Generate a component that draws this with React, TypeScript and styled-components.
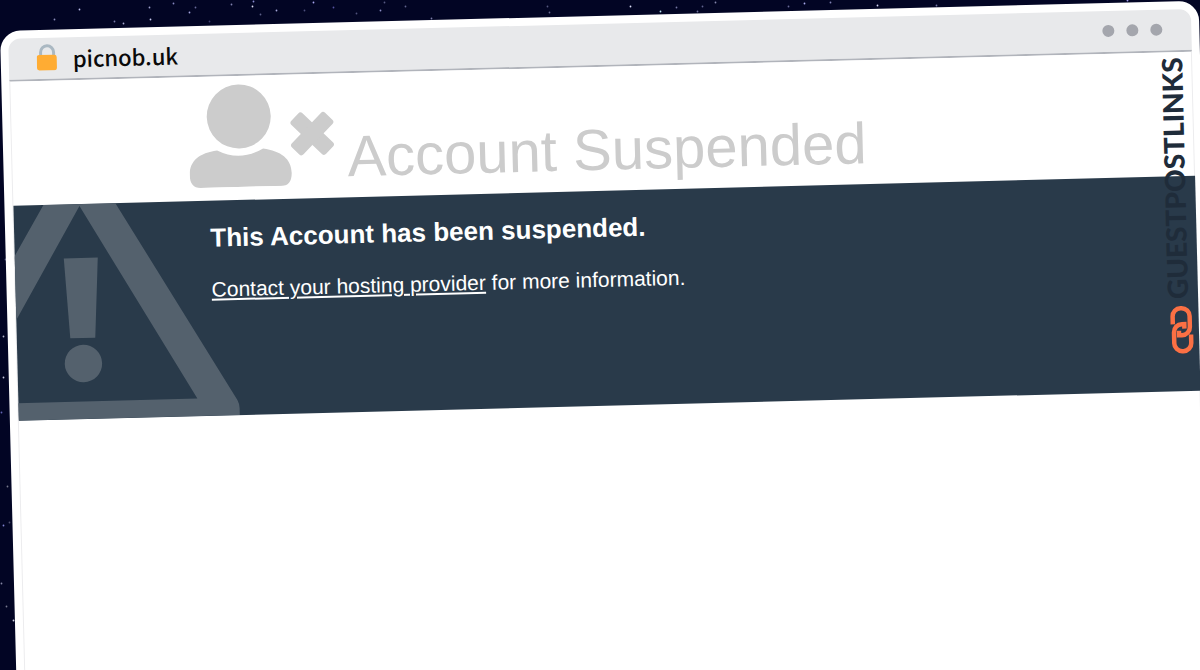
import React from "react";
import styled, { createGlobalStyle } from "styled-components";

const GlobalStyle = createGlobalStyle`
  * { box-sizing: border-box; }
  html, body { margin: 0; height: 100%; overflow: hidden; background: #020524; }
  #root { height: 100%; }
  h1, h2, p { margin: 0; }
`;

const Scene = styled.div`
  position: relative;
  display: flex;
  height: 100vh;
  overflow: hidden;
  padding: 31px 1px 0 0;
  font-family: "Liberation Sans", Arial, sans-serif;
`;

const Sky = styled.svg`
  position: absolute;
  inset: 0;
`;

const BrowserWindow = styled.div`
  position: relative;
  flex: 1;
  display: flex;
  flex-direction: column;
  min-height: 110vh;
  padding: 8px;
  background: #fff;
  border-radius: 20px;
  transform: rotate(-1.45deg);
  transform-origin: 0 0;
`;

const TitleBar = styled.header`
  display: flex;
  align-items: center;
  gap: 15px;
  height: 43px;
  padding: 0 29px 2px 28px;
  background: #e8e9eb;
  border-bottom: 2px solid #b1b4bb;
  border-radius: 12px 12px 0 0;
`;

const Address = styled.span`
  flex: 1;
  color: #0a0a0a;
  font: 500 22px/32px "Noto Sans CJK SC", sans-serif;
`;

const WindowDots = styled.div`
  display: flex;
  gap: 12px;
`;

const Dot = styled.span`
  width: 12px;
  height: 12px;
  border-radius: 50%;
  background: #a4a6ad;
`;

const Page = styled.main`
  position: relative;
  flex: 1;
  border: solid #ececee;
  border-width: 0 1px;
`;

const Heading = styled.div`
  display: flex;
  align-items: flex-end;
  gap: 8px;
  height: 124px;
  padding: 0 0 13px 15%;
  color: #ccc;
`;

const Title = styled.h1`
  font-size: 58px;
  font-weight: 400;
  line-height: 56px;
`;

const Notice = styled.section`
  position: relative;
  height: 215px;
  margin: 0 -1px 0 0;
  padding: 21px 0 0 196px;
  background: #293a4a;
  color: #fff;
`;

const WarningSign = styled.svg`
  position: absolute;
  left: 0;
  top: 0;
`;

const NoticeTitle = styled.h2`
  font-size: 26px;
  line-height: 32px;
`;

const NoticeText = styled.p`
  margin-top: 24px;
  font-size: 21px;
  line-height: 24px;
`;

const ProviderLink = styled.a`
  color: inherit;
  text-decoration: underline;
`;

const Watermark = styled.div`
  position: absolute;
  top: 5px;
  right: 4px;
  display: flex;
  flex-direction: column;
  align-items: flex-end;
  gap: 6px;
  color: #1f2c3a;
`;

const WatermarkText = styled.span`
  writing-mode: vertical-rl;
  transform: rotate(180deg);
  font: 900 28px/32px Lato, sans-serif;
`;

const stars: [number, number, string][] = [
  [79, 9, "#b9bbea"], [54, 19, "#8a8cba"], [114, 21, "#777aa8"], [123, 23, "#a7a9cf"], [149, 7, "#9ea0cc"],
  [150, 19, "#c6c8ee"], [173, 3, "#8688c0"], [195, 7, "#686a99"], [189, 12, "#a3a5dd"], [209, 21, "#3d3f6c"],
  [231, 4, "#8183b0"], [252, 6, "#dcdcf0"], [253, 1, "#8a8cd0"], [276, 10, "#a5a7d8"], [260, 14, "#5c6088"],
  [304, 10, "#4c4f7c"], [313, 2, "#a9a6f0"], [333, 7, "#5553a0"], [356, 13, "#50537c"], [380, 10, "#8c8ec4"],
  [384, 2, "#565982"], [405, 6, "#62658e"], [431, 18, "#7c7ea8"],
  [547, 6, "#55587f"], [549, 12, "#65688e"], [630, 6, "#dddff8"], [660, 11, "#b8e2ef"],
  [676, 7, "#7577a2"], [702, 6, "#5f628d"], [697, 11, "#6f719c"], [715, 2, "#8487ad"], [788, 6, "#696b98"],
  [804, 3, "#a9abeb"], [830, 2, "#8183b5"], [877, 5, "#d5d7f5"], [936, 5, "#7477a5"], [1127, 0, "#a6a0f0"],
  [5, 259, "#55587f"], [3, 336, "#b2b5cb"], [3, 377, "#c6c8dd"], [1, 412, "#6265b5"],
  [7, 486, "#77798c"], [3, 525, "#8083d0"], [9, 522, "#4f5270"], [1, 583, "#8587a5"], [6, 606, "#77798f"], [13, 620, "#d0d2e2"],
];

export default function App() {
  return (
    <>
      <GlobalStyle />
      <Scene>
        <Sky width="100%" height="100%" aria-hidden="true">
          {stars.map(([x, y, color]) => (
            <circle key={`${x}-${y}`} cx={x + 0.5} cy={y + 0.5} r="0.9" fill={color} />
          ))}
        </Sky>
        <BrowserWindow>
          <TitleBar>
            <svg width="21" height="27" viewBox="0 0 21 27" aria-hidden="true">
              <path d="M4 12V8.500a6.500 6.500 0 0 1 13 0V12" fill="none" stroke="#aab8c2" strokeWidth="3" />
              <rect x="0" y="11" width="20" height="15.500" rx="2.500" fill="#ffac33" />
            </svg>
            <Address>picnob.uk</Address>
            <WindowDots>
              <Dot />
              <Dot />
              <Dot />
            </WindowDots>
          </TitleBar>
          <Page>
            <Heading>
              <svg width="150" height="104" viewBox="0 0 150 104" fill="currentColor" aria-hidden="true">
                <circle cx="50.500" cy="33.500" r="32" />
                <path d="M28 67Q51 79 74 66C92 69 102 77 102 91Q102 104 91 104H11Q0 104 0 91C0 77 10 69 28 67Z" />
                <rect x="99.500" y="44.500" width="48" height="16" rx="3" transform="rotate(45 123.500 52.500)" />
                <rect x="99.500" y="44.500" width="48" height="16" rx="3" transform="rotate(-45 123.500 52.500)" />
              </svg>
              <Title>Account Suspended</Title>
            </Heading>
            <Notice>
              <WarningSign width="224" height="215" viewBox="1 0 224 215" fill="#54616d" aria-hidden="true">
                <path d="M31 0H103L220 200Q222 204 222 208V215H0V197.500H180L67 2L0 116V52Z" />
                <path d="M50 54H84L79.500 134H54.500Z" />
                <circle cx="67" cy="159.500" r="18.700" />
              </WarningSign>
              <NoticeTitle>This Account has been suspended.</NoticeTitle>
              <NoticeText>
                <ProviderLink href="#provider">Contact your hosting provider</ProviderLink> for more information.
              </NoticeText>
            </Notice>
            <Watermark>
              <WatermarkText>GUESTPOSTLINKS</WatermarkText>
              <svg width="24" height="49" viewBox="0 0 24 49" fill="none" stroke="#fb7044" strokeWidth="4.500" aria-hidden="true">
                <path d="M3 19V11A8 8 0 0 1 11 3H12A8 8 0 0 1 20 11V22A8 8 0 0 1 12 30H9V25.500" />
                <path d="M21 29.500V38A8 8 0 0 1 13 46H12A8 8 0 0 1 4 38V27A8 8 0 0 1 12 19H14.500V23.500" />
              </svg>
            </Watermark>
          </Page>
        </BrowserWindow>
      </Scene>
    </>
  );
}
